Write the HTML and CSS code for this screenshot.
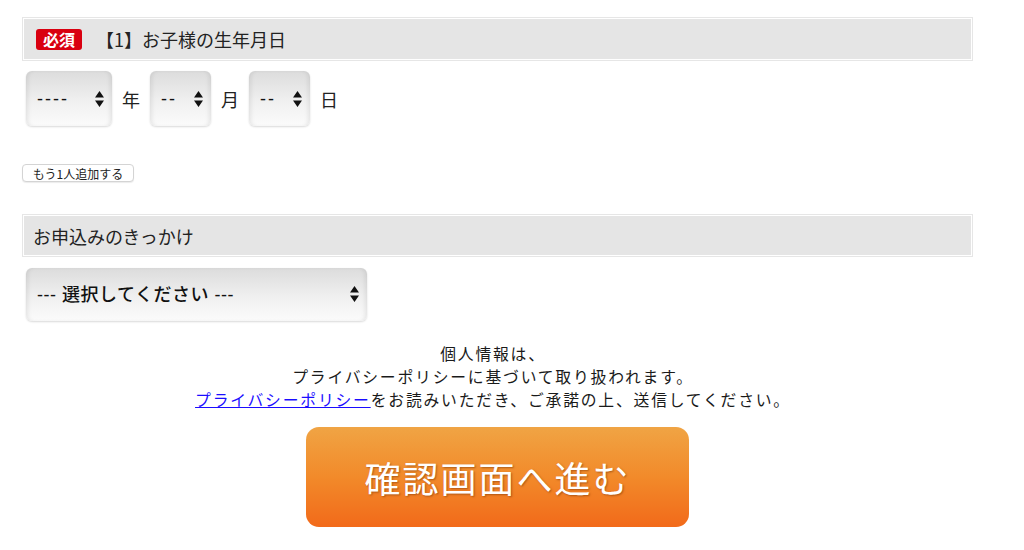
FILE: index.html
```html
<!DOCTYPE html>
<html lang="ja">
<head>
    <meta charset="UTF-8">
    <meta name="viewport" content="width=device-width, initial-scale=1.0">
    <title>お申込みフォーム</title>
    <link rel="stylesheet" href="styles.css">
</head>
<body>
    <form class="entry-form">
        <div class="field-head">
            <span class="required">必須</span>
            <span class="head-text">【1】お子様の生年月日</span>
        </div>

        <div class="date-row">
            <div class="select-box year">
                <select><option>----</option></select>
                <svg class="arrows" width="9" height="16" viewBox="0 0 9 16"><path d="M4.5 0 L9 6.5 H0 Z M0 9.5 H9 L4.5 16 Z" fill="#111"/></svg>
            </div>
            <span class="unit">年</span>
            <div class="select-box small">
                <select><option>--</option></select>
                <svg class="arrows" width="9" height="16" viewBox="0 0 9 16"><path d="M4.5 0 L9 6.5 H0 Z M0 9.5 H9 L4.5 16 Z" fill="#111"/></svg>
            </div>
            <span class="unit">月</span>
            <div class="select-box small">
                <select><option>--</option></select>
                <svg class="arrows" width="9" height="16" viewBox="0 0 9 16"><path d="M4.5 0 L9 6.5 H0 Z M0 9.5 H9 L4.5 16 Z" fill="#111"/></svg>
            </div>
            <span class="unit">日</span>
        </div>

        <button type="button" class="add-btn">もう1人追加する</button>

        <div class="field-head second">
            <span class="head-text">お申込みのきっかけ</span>
        </div>

        <div class="select-box wide">
            <select><option>--- 選択してください ---</option></select>
            <svg class="arrows" width="9" height="16" viewBox="0 0 9 16"><path d="M4.5 0 L9 6.5 H0 Z M0 9.5 H9 L4.5 16 Z" fill="#111"/></svg>
        </div>

        <p class="privacy">
            個人情報は、<br>
            プライバシーポリシーに基づいて取り扱われます。<br>
            <a href="#">プライバシーポリシー</a>をお読みいただき、ご承諾の上、送信してください。
        </p>

        <div class="submit-wrap">
            <button type="button" class="submit-btn">確認画面へ進む</button>
        </div>
    </form>
</body>
</html>
```

FILE: styles.css
```css
body {
    margin: 0;
    background: #fff;
    color: #222;
    font-family: "Noto Sans CJK JP", "Noto Sans", sans-serif;
}

.entry-form {
    width: 951px;
    padding: 17px 0 0 22px;
}

/* section headings */
.field-head {
    display: flex;
    align-items: center;
    gap: 14px;
    box-sizing: border-box;
    height: 44px;
    padding-left: 13px;
    background: #e5e5e5;
    border: 1px solid #e6e6e6;
    box-shadow: inset 0 0 0 1px #fff;
}

.field-head.second {
    height: 43px;
    margin-top: 32px;
    padding-left: 10px;
}

.head-text {
    font-size: 18px;
    color: #222;
}

.required {
    display: inline-block;
    padding: 0 7px;
    height: 21px;
    line-height: 21px;
    border-radius: 3px;
    background: #d90010;
    color: #fff;
    font-size: 16px;
    font-weight: bold;
}

/* fake iOS style selects */
.date-row {
    display: flex;
    align-items: center;
    margin-top: 10px;
    padding-left: 4px;
}

.select-box {
    position: relative;
    height: 55px;
    border-radius: 6px;
    background: linear-gradient(#dcdcdc, #f0f0f0 55%, #fbfbfb);
    box-shadow: inset 4px 0 4px -2px rgba(0, 0, 0, 0.08), inset -4px 0 4px -2px rgba(0, 0, 0, 0.08), 0 1px 2px rgba(0, 0, 0, 0.15);
}

.select-box select {
    appearance: none;
    -webkit-appearance: none;
    width: 100%;
    height: 100%;
    padding: 0 0 0 11px;
    border: none;
    background: transparent;
    font-family: "Liberation Sans", "Noto Sans CJK JP", sans-serif;
    font-size: 18px;
    letter-spacing: 2px;
    color: #111;
}

.select-box .arrows {
    position: absolute;
    right: 8px;
    top: 20px;
    pointer-events: none;
}

.select-box.year { width: 86px; }
.select-box.small { width: 61px; }

.select-box.wide {
    width: 341px;
    height: 53px;
    margin: 11px 0 0 4px;
}

.select-box.wide select {
    font-weight: 500;
    letter-spacing: 0.5px;
}

.select-box.wide .arrows {
    right: 8px;
    top: 18px;
}

.unit {
    width: 38px;
    text-align: center;
    font-size: 18px;
    color: #222;
}

.add-btn {
    display: block;
    margin-top: 38px;
    width: 112px;
    height: 18px;
    padding: 0;
    background: #fff;
    border: 1px solid #d4d4d4;
    border-radius: 4px;
    box-shadow: 0 1px 1px rgba(0, 0, 0, 0.08);
    font-family: inherit;
    font-size: 12px;
    color: #222;
}

/* privacy note */
.privacy {
    margin: 21px 9px 0 0;
    text-align: center;
    font-size: 15.8px;
    letter-spacing: 1.8px;
    line-height: 23px;
    color: #1a1a1a;
}

.privacy a {
    color: #1a0dff;
}

.submit-wrap {
    display: flex;
    justify-content: center;
    margin-top: 16px;
}

.submit-btn {
    width: 383px;
    height: 100px;
    border: none;
    border-radius: 13px;
    background: linear-gradient(#f0a444, #f28a2a 50%, #f26a1a);
    color: #fff;
    font-family: inherit;
    font-size: 36px;
    letter-spacing: 2px;
    text-shadow: 1px 1px 2px rgba(120, 50, 0, 0.55);
    cursor: pointer;
}
```
